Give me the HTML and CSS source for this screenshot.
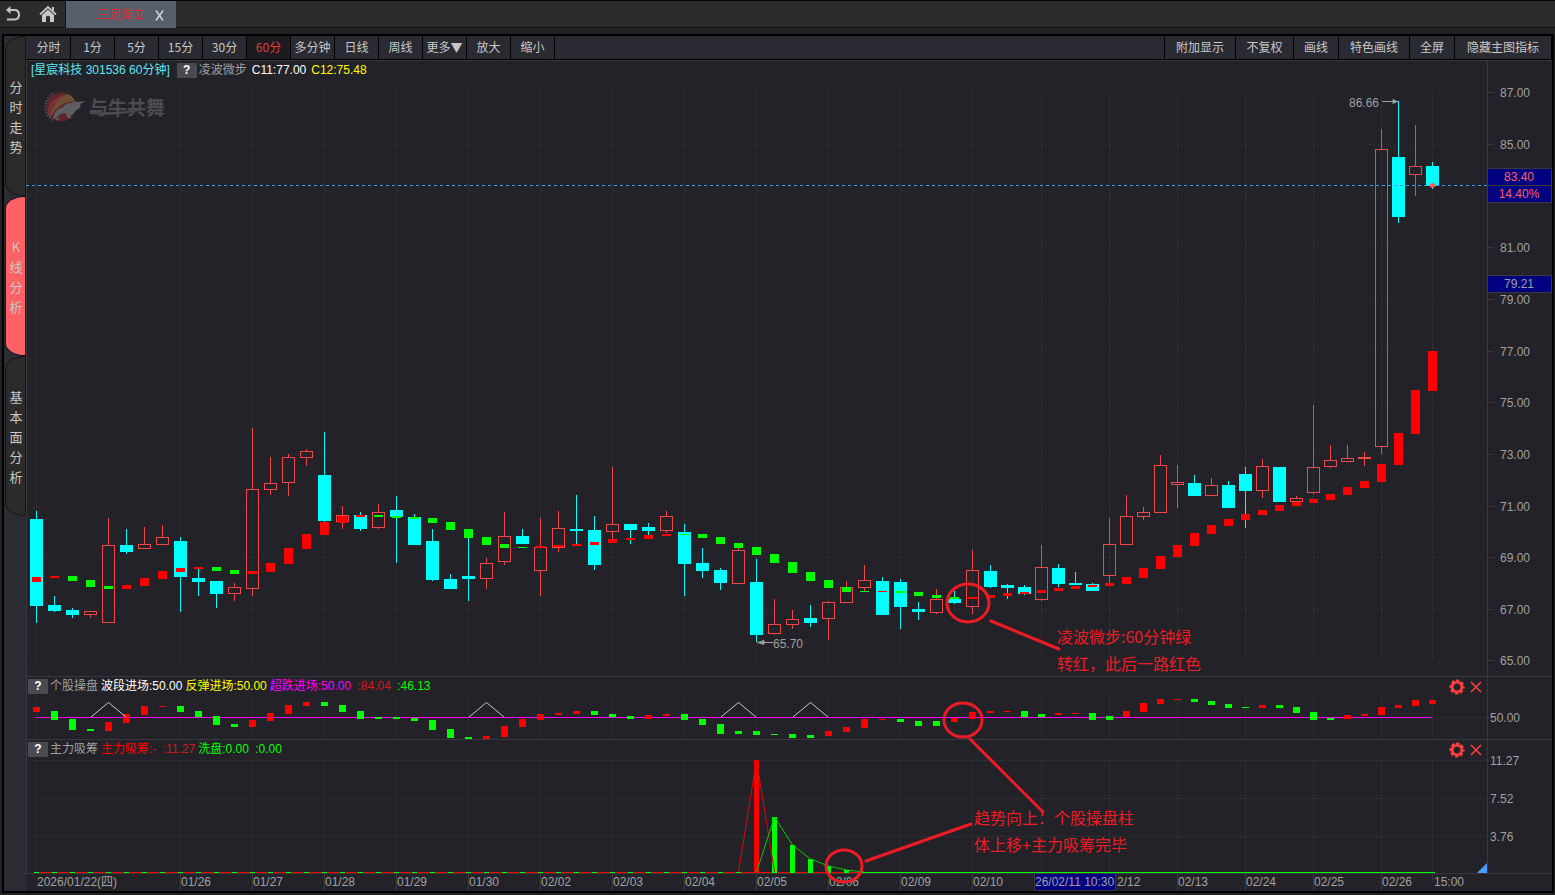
FILE: index.html
```html
<!DOCTYPE html>
<html lang="zh-CN">
<head>
<meta charset="utf-8">
<title>星宸科技 301536</title>
<link rel="stylesheet" href="styles.css">
</head>
<body>
<header class="topbar">
  <button class="icon-btn" type="button" aria-label="返回">
    <svg width="16" height="18" viewBox="0 0 16 18"><path d="M2 5H9.5C12.6 5 14 7 14 9.8C14 12.8 12.3 14.5 9.5 14.5H2" fill="none" stroke="#c6c6c6" stroke-width="2"/><path d="M1 5L5.5 1V9Z" fill="#c6c6c6"/></svg>
  </button>
  <button class="icon-btn" type="button" aria-label="首页">
    <svg width="18" height="18" viewBox="0 0 18 18"><path d="M1 9.5L9 2L17 9.5" fill="none" stroke="#c6c6c6" stroke-width="1.8"/><path d="M3 10L9 4.6L15 10V17H11V12.5Q11 10.8 9 10.8Q7 10.8 7 12.5V17H3Z" fill="#c6c6c6"/><path d="M13 2H15V6L13 4.4Z" fill="#c6c6c6"/></svg>
  </button>
  <div class="doc-tab"><span class="doc-name">三足鼎立</span><button class="doc-close" type="button" aria-label="关闭"><svg width="9" height="11" viewBox="0 0 9 11"><path d="M1 0.5L8 10.5M8 0.5L1 10.5" stroke="#d6d6d6" stroke-width="1.4"/></svg></button></div>
</header>
<main class="workspace">
  <nav class="side">
    <button class="side-tab" type="button"><span>分时走势</span></button>
    <button class="side-tab active" type="button"><span>K线分析</span></button>
    <button class="side-tab" type="button"><span>基本面分析</span></button>
  </nav>
  <section class="content">
    <div class="toolbar">
      <div class="periods">
        <button type="button">分时</button><button type="button">1分</button><button type="button">5分</button><button type="button">15分</button><button type="button">30分</button><button type="button" class="active">60分</button><button type="button">多分钟</button><button type="button">日线</button><button type="button">周线</button><button type="button">更多▼</button><button type="button">放大</button><button type="button">缩小</button>
      </div>
      <div class="tools">
        <button type="button">附加显示</button><button type="button">不复权</button><button type="button">画线</button><button type="button">特色画线</button><button type="button">全屏</button><button type="button">隐藏主图指标</button>
      </div>
    </div>
    <div class="chart">
      <div class="pane pane-main">
        <svg id="main" viewBox="26 60 1526 616"></svg>
        <div class="legend">
          <span class="c-title">[星宸科技 301536 60分钟]</span><button class="help" type="button">?</button><span class="c-grey">凌波微步</span><span class="c-white">C11:77.00</span><span class="c-yellow">C12:75.48</span>
        </div>
      </div>
      <div class="pane">
        <svg id="sub1" viewBox="26 676 1526 63"></svg>
        <div class="legend">
          <button class="help" type="button">?</button><span class="c-grey">个股操盘</span><span class="c-white">波段进场:50.00</span><span class="c-yellow">反弹进场:50.00</span><span class="c-magenta">超跌进场:50.00</span><span class="c-dred">&nbsp;:84.04</span><span class="c-green">&nbsp;:46.13</span>
        </div>
        <div class="pane-actions">
          <button type="button" aria-label="设置"><svg width="16" height="16" viewBox="-8 -8 16 16"><use href="#gear"/></svg></button>
          <button type="button" aria-label="关闭"><svg width="12" height="16" viewBox="-6 -8 12 16"><path d="M-5-5L5 5M5-5L-5 5" stroke="#ff4040" stroke-width="1.5"/></svg></button>
        </div>
      </div>
      <div class="pane">
        <svg id="sub2" viewBox="26 739 1526 134"></svg>
        <div class="legend">
          <button class="help" type="button">?</button><span class="c-grey">主力吸筹</span><span class="c-red">主力吸筹:-</span><span class="c-dred">&nbsp;:11.27</span><span class="c-green">洗盘:0.00</span><span class="c-green">&nbsp;:0.00</span>
        </div>
        <div class="pane-actions">
          <button type="button" aria-label="设置"><svg width="16" height="16" viewBox="-8 -8 16 16"><use href="#gear"/></svg></button>
          <button type="button" aria-label="关闭"><svg width="12" height="16" viewBox="-6 -8 12 16"><path d="M-5-5L5 5M5-5L-5 5" stroke="#ff4040" stroke-width="1.5"/></svg></button>
        </div>
      </div>
      <div class="pane">
        <svg id="axis" viewBox="26 873 1526 18"></svg>
      </div>
      <svg class="notes" viewBox="26 60 1526 831">
        <defs><g id="gear"><circle r="4.8" fill="none" stroke="#ff4040" stroke-width="2.6"/><circle r="6.2" fill="none" stroke="#ff4040" stroke-width="2.6" stroke-dasharray="3.2 1.67" stroke-dashoffset="1.6"/></g></defs>
        <g class="note-line">
          <ellipse cx="968" cy="603" rx="21" ry="19"/><path d="M991 621L1059 649"/>
          <ellipse cx="963" cy="720" rx="19" ry="17"/><path d="M970 739L1043 812"/>
          <ellipse cx="844" cy="866" rx="18" ry="16"/><path d="M866 861L971 824"/>
        </g>
        <g class="note-text">
          <text x="1057" y="643">凌波微步:60分钟绿</text><text x="1057" y="670">转红，此后一路红色</text>
          <text x="974" y="824">趋势向上：个股操盘柱</text><text x="974" y="851">体上移+主力吸筹完毕</text>
        </g>
      </svg>
    </div>
  </section>
</main>
<script src="chart.js"></script>
</body>
</html>
```
FILE: styles.css
```css
* { box-sizing: border-box; }
body {
  margin: 0;
  height: 100vh;
  display: flex;
  flex-direction: column;
  background: #222224;
  color: #c8c8c8;
  font: 12px/16px "Liberation Sans", "Noto Sans CJK SC", sans-serif;
  overflow: hidden;
}
button { margin: 0; padding: 0; border: 0; background: none; color: inherit; font: inherit; cursor: pointer; }
.topbar {
  flex: none;
  display: flex;
  height: 28px;
  background: #2b2b2b;
  border-top: 1px solid #000;
  border-bottom: 1px solid #111;
}
.icon-btn { display: grid; place-items: center; width: 26px; }
.icon-btn + .icon-btn { width: 40px; padding-left: 4px; border-right: 1px solid #111; }
.doc-tab { display: flex; align-items: center; gap: 10px; width: 110px; height: 27px; padding-left: 31px; background: #56606c; }
.doc-name { color: #e02a30; }
.doc-close { display: grid; place-items: center; width: 9px; padding-top: 2px; }

.workspace {
  flex: 1;
  min-height: 0;
  display: flex;
  margin: 6px 1px 2px 2px;
  border: 2px solid #000;
}
.side { flex: none; width: 22px; display: flex; flex-direction: column; gap: 2px; padding: 1px 1px 0 2px; background: #2b2b33; }
.side-tab {
  display: flex;
  justify-content: center;
  align-items: center;
  height: 158px;
  padding: 2px 0 0 1px;
  border-radius: 20px 0 0 20px / 12px;
  background: #2b2b2b;
  box-shadow: 0 0 0 1px #151517;
  font: 13px/20px "Noto Sans CJK SC", sans-serif;
}
.side-tab span { width: 13px; word-break: break-all; }
.side-tab.active { background: #ff6165; }

.content { flex: 1; min-width: 0; display: flex; flex-direction: column; }
.toolbar {
  flex: none;
  display: flex;
  justify-content: space-between;
  height: 24px;
  padding: 0 0 0 1px;
  background: #2a2a32;
  border-bottom: 1px solid #000;
  font-family: "Noto Sans CJK SC", sans-serif;
}
.periods { display: grid; grid-template-columns: repeat(12, 44px); }
.tools { display: grid; grid-template-columns: 71px 58px 45px 71px 45px 97px; border-left: 1px solid #000; }
.toolbar button { padding-bottom: 1px; border-right: 1px solid #000; white-space: nowrap; }
.toolbar .active { background: #1b1b20; color: #e03a3a; }

.chart { flex: 1; min-height: 0; display: grid; grid-template-rows: 616fr 63fr 134fr 18px; background: #232228; }
.pane { grid-column: 1; min-height: 0; display: grid; grid-template: minmax(0, 1fr) / minmax(0, 1fr); }
.pane:nth-child(1) { grid-row: 1; }
.pane:nth-child(2) { grid-row: 2; }
.pane:nth-child(3) { grid-row: 3; }
.pane:nth-child(4) { grid-row: 4; }
.pane > * { grid-area: 1 / 1; }
.pane > svg, .notes { width: 100%; height: 100%; display: block; }
.notes { grid-area: 1 / 1 / -1 / -1; pointer-events: none; }
.legend { align-self: start; display: flex; align-items: center; gap: 3px; height: 20px; padding-left: 2px; white-space: nowrap; }
.pane-main .legend { gap: 5px; padding-left: 5px; }
.help { width: 20px; height: 15px; background: #4a4a50; color: #fff; font-weight: 700; line-height: 15px; }
.pane-main .help { margin-left: 2px; }
.help + span { margin-left: -1px; }
.pane-main .help + span { margin-left: -3px; }
.pane-actions { justify-self: end; align-self: start; display: flex; gap: 5px; padding: 3px 70px 0 0; }
.pane-actions button, .pane-actions svg { display: block; }

.c-title { color: #5ce8f2; }
.c-grey { color: #a0a0a0; }
.c-white { color: #fff; }
.c-yellow { color: #ff0; }
.c-magenta { color: #f0f; }
.c-red { color: #f00; }
.c-dred { color: #d81818; }
.c-green { color: #0f0; }

.crisp { shape-rendering: crispEdges; }
.grid-line { stroke: #38373d; fill: none; }
.frame-line { stroke: #38383e; fill: none; }
.up-body { fill: none; stroke: #f04848; }
.up { fill: #f04848; }
.down { fill: #0ff; }
.red { fill: #f00; }
.green { fill: #0f0; }
.level { fill: #f0f; }
.tag { fill: #000080; stroke: #38383e; }
.label { fill: #a0a0a0; }
.label-hot { fill: #ff6068; }
.pointer { fill: #a0a0a0; stroke: #a0a0a0; }
.last-line { stroke: #3b9cf0; stroke-dasharray: 3 3; }
.logo-text { fill: #4b4b50; font: 700 19px "Noto Sans CJK SC", sans-serif; }
.note-line { fill: none; stroke: #ed1c24; stroke-width: 3; stroke-linecap: round; }
.note-text { fill: #ed1c24; font: 16px "Noto Sans CJK SC", sans-serif; }
```
FILE: chart.js
```js
// Each row: direction, high, body top, body bottom, low, step colour, step top, step bottom
const bars = `d 511 519 606 623 r 577 582|d 596 605 611 612 r 576 578|d 608 610 615 618 g 576 581|u 611 611 615 618 g 580 587
u 518 545 623 623 g 586 589|d 529 545 552 554 r 585 589|u 527 544 549 549 r 578 586|u 525 537 545 545 r 571 579
d 537 541 577 612 r 568 572|d 569 578 582 596 r 567 569|d 581 581 594 608 g 567 571|u 583 587 594 601 g 570 574
u 428 489 589 596 r 571 574|u 457 483 490 495 r 563 572|u 454 457 483 496 r 548 564|u 449 451 458 466 r 534 549
d 432 475 521 522 r 522 535|u 506 515 522 529 r 516 523|d 512 515 529 531 r 515 517|u 504 512 528 529 g 515 517
d 496 510 517 563 g 516 518|d 514 517 545 545 g 517 519|d 529 541 580 581 g 518 523|d 574 579 589 589 g 522 530
d 530 576 579 601 g 529 538|u 558 563 579 589 g 537 545|u 512 536 562 565 g 544 548|d 529 536 544 544 g 547 548
u 518 547 571 596 r 546 548|u 511 528 548 552 r 545 547|d 495 529 531 544 r 544 546|d 516 530 565 570 r 542 545
u 467 524 532 539 r 539 543|d 524 524 530 544 r 538 540|d 523 527 531 535 r 535 539|u 511 516 531 533 r 534 536
d 524 532 564 596 g 534 535|d 548 563 571 578 g 534 538|d 568 570 583 590 g 537 544|u 548 550 584 584 g 543 548
d 559 582 635 642 g 547 555|u 599 624 634 635 g 554 563|u 610 619 625 629 g 562 573|d 605 618 623 627 g 572 581
u 601 602 619 640 g 580 588|u 581 587 603 603 g 587 592|u 565 580 588 591 g 591 592|d 577 581 615 615 r 591 592
d 579 582 607 629 g 591 593|d 602 609 612 620 g 592 596|u 589 599 613 614 g 595 598|d 591 599 603 604 g 597 599
u 550 570 607 614 r 597 599|d 565 571 587 588 r 595 598|d 584 585 588 599 r 593 596|d 585 587 594 595 r 592 594
u 545 567 600 601 r 590 593|d 564 568 584 587 r 588 591|d 572 583 585 585 r 586 589|d 583 584 591 591 r 585 587
u 518 544 576 583 r 583 586|u 495 516 545 545 r 577 584|u 507 512 517 520 r 568 578|u 455 465 513 513 r 556 569
u 465 482 485 508 r 545 557|d 475 483 496 496 r 533 546|u 478 485 496 496 r 525 534|d 481 485 508 508 r 519 526
d 467 474 491 528 r 514 520|u 459 466 491 498 r 510 515|d 467 467 502 502 r 505 511|u 496 498 502 502 r 502 506
u 405 467 493 494 r 499 503|u 445 460 467 468 r 494 500|u 445 458 462 462 r 487 495|u 452 457 459 466 r 481 488
u 129 149 447 454 r 464 482|d 101 157 217 223 r 433 465|u 125 166 175 196 r 390 434|d 162 166 186 189 r 351 391`
  .split(/[|\n]/).map(row => row.trim().split(' '));

const momentum = `r707-712 g711-720 g719-730 g729-731 r722-731 r714-723 r706-715 r706-707 g706-712 g711-717 g716-725 g724-727 r720-727 r713-721 r705-714 r702-706
g702-706 g705-712 g711-719 g717-719 g717-719 g718-721 g720-730 g729-738 g737-739 r736-739 r726-737 r719-727 r714-720 r713-715 r711-714 g711-715
g714-717 g716-719 r715-719 r714-716 g714-720 g719-725 g724-734 g731-734 g731-735 g734-735 g734-738 g735-738 r731-736 r727-732 r719-728 r719-720
g719-722 g721-726 g721-726 r718-722 r712-719 r711-713 r711-712 g711-717 g714-717 r713-715 r713-714 g713-720 g716-720 r711-717 r703-712 r699-704
r699-700 g699-702 g701-705 g704-708 g707-708 r705-708 g705-708 g707-713 g712-720 g718-720 r715-719 r714-716 r707-715 r705-708 r700-706 r700-704`
  .split(/\s+/);

const days = [[0, '2026/01/22(四)'], [8, '01/26'], [12, '01/27'], [16, '01/28'], [20, '01/29'], [24, '01/30'], [28, '02/02'],
  [32, '02/03'], [36, '02/04'], [40, '02/05'], [44, '02/06'], [48, '02/09'], [52, '02/10'], [56, ''], [60, ''],
  [64, '02/13'], [68, '02/24'], [72, '02/25'], [76, '02/26'], [79, '15:00']];

const AXIS = 1487;
const xAt = i => (i <= 53 ? 36 + 18 * i : 990 + 17 * (i - 53));
const rect = (cls, x, y, w, h) => `<rect class="${cls}" x="${x}" y="${y}" width="${w}" height="${h}"/>`;
const hLine = (cls, x1, x2, y, dash = '') => `<path class="${cls}" d="M${x1} ${y + 0.5}H${x2}" stroke-dasharray="${dash}"/>`;
const vLine = (cls, x, y1, y2, dash = '') => `<path class="${cls}" d="M${x + 0.5} ${y1}V${y2}" stroke-dasharray="${dash}"/>`;
const text = (cls, x, y, s, anchor = 'start') => `<text class="${cls}" x="${x}" y="${y}" text-anchor="${anchor}">${s}</text>`;
const dayLines = (y1, y2) => days.map(([i]) => vLine('grid-line', xAt(i), y1, y2, '1 1')).join('');
const draw = (id, crisp, rest) => {
  document.getElementById(id).innerHTML = `<g class="crisp">${crisp}</g>${rest}`;
};
const fillOf = c => (c === 'r' ? 'red' : 'green');

function drawMain() {
  let crisp = hLine('frame-line', 26, 1552, 60) + vLine('frame-line', 26, 60, 676) + vLine('frame-line', AXIS, 60, 676);
  let labels = '';
  const rows = [92, 144, 196, 247, 299, 351, 402, 454, 506, 557, 609, 660];
  rows.forEach((y, n) => {
    crisp += hLine('grid-line', 30, AXIS, y, '1 3') + hLine('frame-line', AXIS, 1494, y);
    if (n !== 2) labels += text('label', 1500, y + 5, (87 - 2 * n).toFixed(2));
  });
  crisp += dayLines(92, 660);
  bars.forEach(([dir, hi, top, bottom, lo, color, s1, s2], i) => {
    const x = xAt(i);
    if (dir === 'd') {
      crisp += rect('down', x, hi, 1, lo - hi) + rect('down', x - 6, top, 13, bottom - top);
    } else {
      crisp += rect('up', x, hi, 1, top - hi) + rect('up', x, bottom, 1, lo - bottom);
      crisp += rect('up-body', x - 5.5, +top + 0.5, 12, bottom - top - 1);
    }
    crisp += rect(fillOf(color), x - 4, s1, 9, s2 - s1);
  });
  crisp += hLine('last-line', 26, AXIS, 185).replace(' stroke-dasharray=""', '');
  crisp += rect('tag', 1487.5, 168.5, 64, 17) + rect('tag', 1487.5, 185.5, 64, 17) + rect('tag', 1487.5, 275.5, 64, 17);

  labels += text('label-hot', 1519, 181, '83.40', 'middle') + text('label-hot', 1519, 198, '14.40%', 'middle');
  labels += text('label', 1519, 288, '79.21', 'middle');
  labels += text('label', 773, 648, '65.70') + text('label', 1349, 107, '86.66');
  labels += '<path class="pointer" d="M757 642.5H773M758 642.5L764 640.5V644.5Z"/><path class="pointer" d="M1382 101.5H1398M1397 101.5L1393 99.5V103.5Z"/>';
  labels += '<circle cx="1432.5" cy="185.5" r="2.5" fill="#ff5a5a"/>';
  labels += `<g>
    <clipPath id="logoLeft"><rect x="42" y="90" width="12" height="34"/></clipPath>
    <circle cx="61" cy="107" r="14.5" fill="#5a262b"/>
    <path d="M49 115Q51 99 68 94Q73 96 75 101Q58 102 50 118Z" fill="#6e5034"/>
    <path d="M50 117Q53 102 66 94Q55 96 50 104Q46 110 50 117Z" fill="#7a3034"/>
    <path d="M53 118Q55 109 63 107Q66 103 71 103Q75 100 78 102L86 101Q82 103 80 104Q82 107 78 109Q75 111 74 113L70 116L71 119L67 117L66 113L60 114L56 118L60 118L58 120Z" fill="#5d5d62"/>
    <circle cx="61" cy="107" r="15.5" fill="none" stroke="#55555a" stroke-width="2" stroke-dasharray="1.5 1.5" clip-path="url(#logoLeft)"/>
  </g>` + text('logo-text', 89, 115, '与牛共舞') + '<path d="M90 114Q120 117 150 108Q125 113 90 112Z" fill="#4b4b50"/>';
  draw('main', crisp, labels);
}

function drawMomentum() {
  let crisp = hLine('frame-line', 26, 1552, 676) + vLine('frame-line', 26, 676, 739) + vLine('frame-line', AXIS, 676, 739);
  crisp += dayLines(697, 738) + hLine('grid-line', 28, 1494, 717, '1 1');
  crisp += rect('level', xAt(0), 717, xAt(79) - xAt(0), 1);
  momentum.forEach((item, i) => {
    const [top, bottom] = item.slice(1).split('-').map(Number);
    crisp += rect(fillOf(item[0]), xAt(i) - 3, top, 7, bottom - top);
  });
  const peaks = [4, 25, 39, 43].map(i => `M${xAt(i - 1) + 1} 717L${xAt(i) + 0.5} 702.5L${xAt(i + 1)} 717`).join('');
  draw('sub1', crisp, `<path d="${peaks}" fill="none" stroke="#c8c8c8"/>` + text('label', 1490, 722, '50.00'));
}

function drawFlow() {
  let crisp = hLine('frame-line', 26, 1552, 739) + vLine('frame-line', 26, 739, 873) + vLine('frame-line', AXIS, 739, 873);
  let rest = '';
  [[760, '11.27'], [798, '7.52'], [836, '3.76']].forEach(([y, s]) => {
    crisp += hLine('grid-line', 28, 1494, y, '1 1');
    rest += text('label', 1490, y + 5, s);
  });
  crisp += dayLines(760, 872) + rect('red', 36, 872, 828, 1) + rect('green', 862, 872, 573, 1);
  for (let i = 0; i < 40; i++) crisp += rect('green', xAt(i) - 2, 872, 5, 1);
  crisp += rect('red', xAt(40) - 2, 760, 5, 113);
  [817, 845, 859, 866, 870].forEach((y, n) => { crisp += rect('green', xAt(41 + n) - 2, y, 5, 873 - y); });
  rest += '<path d="M738.5 872L756.5 760L774.5 872" fill="none" stroke="#d00c0c"/>';
  rest += '<path d="M756.5 872L774.5 817L792.5 845L810.5 859L828.5 866L846.5 870L864.5 872" fill="none" stroke="#0c0"/>';
  rest += '<path d="M1477 873L1487 863V873Z" fill="#4a9cff"/>';
  draw('sub2', crisp, rest);
}

function drawAxis() {
  let crisp = hLine('frame-line', 26, 1552, 873);
  let rest = '';
  days.forEach(([i, s]) => {
    if (i > 0) crisp += vLine('frame-line', xAt(i), 873, i === 79 ? 881 : 891);
    if (s) rest += text('label', xAt(i) + (i === 79 ? 2 : 1), 886, s);
  });
  // The cursor tag hides the first digit of the day label on its right.
  rest += rect('tag crisp', 1034.5, 873.5, 81, 17) + text('label', 1035, 886, '26/02/11 10:30') + text('label', 1117, 886, '2/12');
  draw('axis', crisp, rest);
}

drawMain();
drawMomentum();
drawFlow();
drawAxis();
```
